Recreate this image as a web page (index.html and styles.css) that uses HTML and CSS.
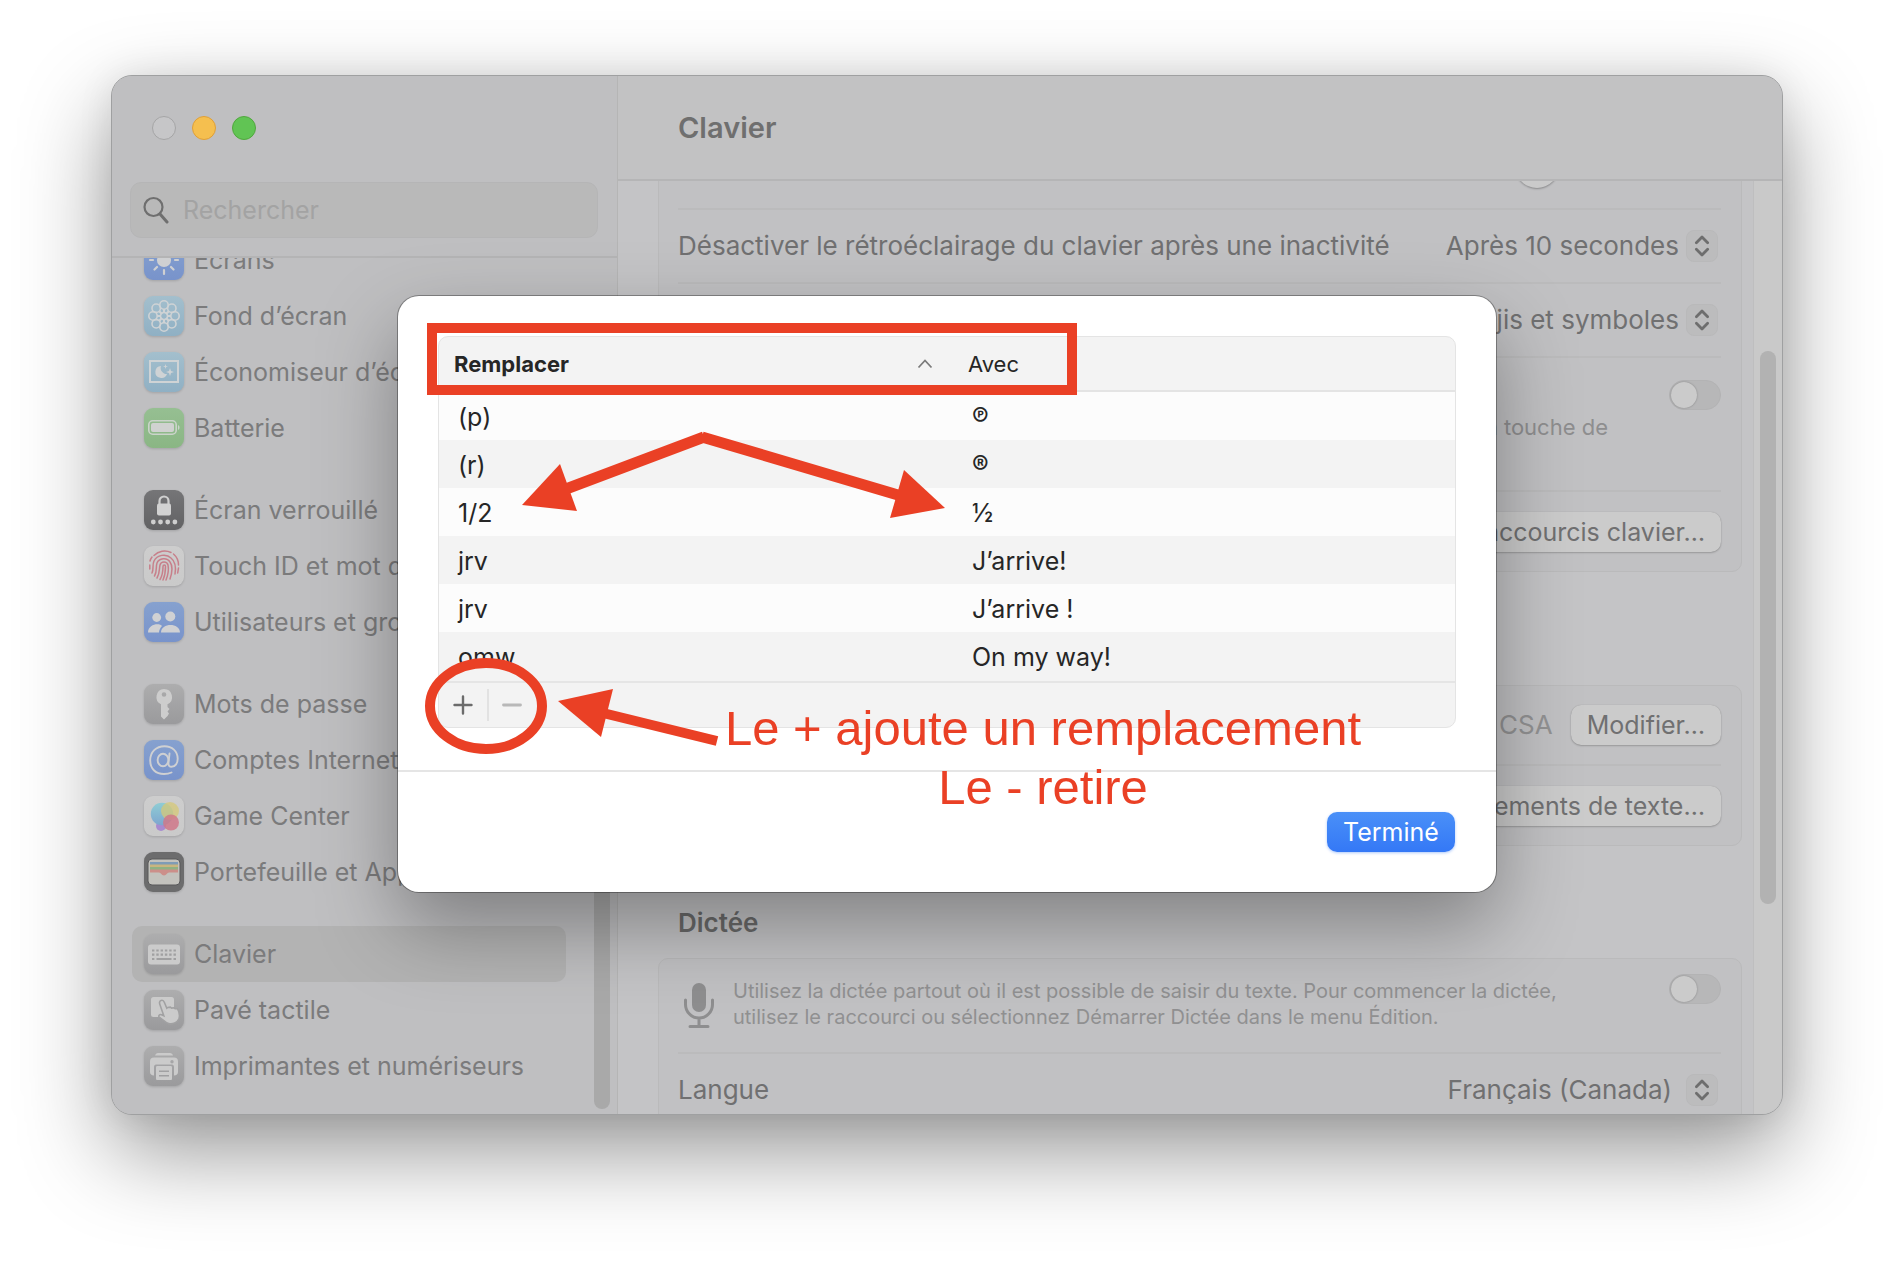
FILE: index.html
```html
<!DOCTYPE html>
<html lang="fr">
<head>
<meta charset="utf-8">
<meta name="viewport" content="width=device-width, initial-scale=1">
<title>Clavier</title>
<link rel="stylesheet" href="styles.css">
</head>
<body>
<svg width="0" height="0" class="defs" aria-hidden="true">
  <defs>
    <linearGradient id="g-blue" x1="0" y1="0" x2="0" y2="1"><stop offset="0" stop-color="#86a1cf"/><stop offset="1" stop-color="#7893cb"/></linearGradient>
    <linearGradient id="g-sky" x1="0" y1="0" x2="0" y2="1"><stop offset="0" stop-color="#a3bfcd"/><stop offset="1" stop-color="#8fb0c4"/></linearGradient>
    <linearGradient id="g-green" x1="0" y1="0" x2="0" y2="1"><stop offset="0" stop-color="#96bf92"/><stop offset="1" stop-color="#8ab684"/></linearGradient>
    <linearGradient id="g-dark" x1="0" y1="0" x2="0" y2="1"><stop offset="0" stop-color="#757577"/><stop offset="1" stop-color="#626264"/></linearGradient>
    <linearGradient id="g-gray" x1="0" y1="0" x2="0" y2="1"><stop offset="0" stop-color="#adadae"/><stop offset="1" stop-color="#9a9a9c"/></linearGradient>
    <linearGradient id="g-white" x1="0" y1="0" x2="0" y2="1"><stop offset="0" stop-color="#cdcdcd"/><stop offset="1" stop-color="#cacaca"/></linearGradient>
    <linearGradient id="g-bubble" x1="0" y1="0" x2="0" y2="1"><stop offset="0" stop-color="#8fcdd4"/><stop offset="1" stop-color="#7ea6cf"/></linearGradient>
    <symbol id="updown" viewBox="0 0 32 32"><path d="M10 12.500l6-6 6 6M10 19.500l6 6 6-6" fill="none" stroke="#6e6e6e" stroke-width="3" stroke-linecap="round" stroke-linejoin="round"/></symbol>
  </defs>
</svg>

<main class="stage">
  <div class="window">
    <aside class="sidebar">
      <div class="lights">
        <button class="light off" aria-label="Fermer"></button>
        <button class="light yellow" aria-label="Réduire"></button>
        <button class="light green" aria-label="Agrandir"></button>
      </div>
      <div class="search">
        <svg width="26" height="28" viewBox="0 0 26 28" aria-hidden="true"><circle cx="10.500" cy="11" r="9" fill="none" stroke="#6f6f6f" stroke-width="2.200"/><path d="M17 18l7 8" stroke="#6f6f6f" stroke-width="3" stroke-linecap="round"/></svg>
        <input type="search" placeholder="Rechercher" aria-label="Rechercher">
      </div>
      <nav class="list">
        <ul>
          <li><a href="#"><svg class="icon" viewBox="0 0 40 40"><rect width="40" height="40" rx="9" fill="url(#g-blue)"/><g fill="#cfd0d2" stroke="#cfd0d2" stroke-width="2.200" stroke-linecap="round"><circle cx="20" cy="20" r="6"/><path d="M20 6v4M20 30v4M6 20h3M31 20h3M10.500 10.500l2.500 2.500M27 27l2.500 2.500M29.500 10.500L27 13M13 27l-2.500 2.500"/></g></svg>Écrans</a></li>
          <li><a href="#"><svg class="icon" viewBox="0 0 40 40"><rect width="40" height="40" rx="9" fill="url(#g-sky)"/><g fill="none" stroke="#cfd3d5" stroke-width="1.600"><circle cx="20" cy="9" r="4.200"/><circle cx="20" cy="31" r="4.200"/><circle cx="9" cy="20" r="4.200"/><circle cx="31" cy="20" r="4.200"/><circle cx="12.200" cy="12.200" r="4.200"/><circle cx="27.800" cy="12.200" r="4.200"/><circle cx="12.200" cy="27.800" r="4.200"/><circle cx="27.800" cy="27.800" r="4.200"/><circle cx="20" cy="20" r="3.500"/><path d="M20 13v4M20 23v4M13 20h4M23 20h4M15 15l3 3M22 22l3 3M25 15l-3 3M18 22l-3 3" stroke-width="2.200"/></g></svg>Fond d’écran</a></li>
          <li><a href="#"><svg class="icon" viewBox="0 0 40 40"><rect width="40" height="40" rx="9" fill="url(#g-sky)"/><rect x="6" y="9" width="28" height="21" fill="none" stroke="#cfd3d5" stroke-width="2"/><path d="M17 14a6 6 0 1 0 6 8 6 6 0 0 1-6-8z" fill="#cfd3d5"/><path d="M26 16l1 3 3 1-3 1-1 3-1-3-3-1 3-1zM21.500 12l.6 1.900 1.900.6-1.900.6-.6 1.900-.6-1.900-1.900-.6 1.900-.6z" fill="#cfd3d5"/></svg>Économiseur d’écran</a></li>
          <li><a href="#"><svg class="icon" viewBox="0 0 40 40"><rect width="40" height="40" rx="9" fill="url(#g-green)"/><rect x="4.800" y="12.800" width="27.400" height="13.400" rx="4" fill="none" stroke="#ccd4cb" stroke-width="1.600"/><rect x="7" y="15" width="23" height="9" rx="2" fill="#d0d2d0"/><path d="M34 17v5c2-.8 2-4.200 0-5z" fill="#ccd4cb"/></svg>Batterie</a></li>
        </ul>
        <ul>
          <li><a href="#"><svg class="icon" viewBox="0 0 40 40"><rect width="40" height="40" rx="9" fill="url(#g-dark)"/><path d="M15.500 14v-3a4.500 4.500 0 0 1 9 0v3" fill="none" stroke="#cfcfcf" stroke-width="2.200"/><rect x="13" y="13.500" width="14" height="12" rx="2" fill="#d2d2d2"/><g fill="#cfcfcf"><circle cx="9.300" cy="32" r="2.400"/><circle cx="16.500" cy="32" r="2.400"/><circle cx="23.700" cy="32" r="2.400"/><circle cx="30.900" cy="32" r="2.400"/></g></svg>Écran verrouillé</a></li>
          <li><a href="#"><svg class="icon" viewBox="0 0 40 40"><rect width="40" height="40" rx="9" fill="url(#g-white)"/><g fill="none" stroke="#c77f8a" stroke-width="1.500" stroke-linecap="round"><path d="M10 9.500a15 15 0 0 1 17-3M29.500 8a14.500 14.500 0 0 1 5 11M6 15a14 14 0 0 1 2-4M5.800 19v4"/><path d="M8 27c2-4 0-8 2-12 3-6 12-8 17-3 5 4 5 10 4 16M34.500 22l-.8 5"/><path d="M10.500 30c3-5 1-9 2.500-13 2-5 10-6 13-1 3 4 2 11 0 17"/><path d="M13 32c3-5 2-9 3-13 1-4 7-4 8 0 1 5 0 10-2 15"/><path d="M16 33.500c3-5 3-8 3-13 0-2 2.500-2 2.500 0 0 5 0 8-2.500 13.500"/></g></svg>Touch ID et mot de passe</a></li>
          <li><a href="#"><svg class="icon" viewBox="0 0 40 40"><rect width="40" height="40" rx="9" fill="url(#g-blue)"/><g fill="#d0d1d3"><circle cx="12.700" cy="15.500" r="4.400"/><circle cx="26.300" cy="14.500" r="5"/><path d="M4 30.500c0-9 12-10 14-6.500-1.500 1.500-3 4-3 6.500zM17 30.500c0-10 19-10 19 0z"/></g></svg>Utilisateurs et groupes</a></li>
        </ul>
        <ul>
          <li><a href="#"><svg class="icon" viewBox="0 0 40 40"><rect width="40" height="40" rx="9" fill="url(#g-gray)"/><path fill-rule="evenodd" d="M20 5a8 8 0 0 1 3.500 15.200V23l2 2-2 2.500 1.500 2-1.500 2.500-3.500 3.500-3-3V20.200A8 8 0 0 1 20 5zm0 3.200a2.300 2.300 0 1 0 0 4.600 2.300 2.300 0 0 0 0-4.600z" fill="#cdcdcd"/></svg>Mots de passe</a></li>
          <li><a href="#"><svg class="icon" viewBox="0 0 40 40"><rect width="40" height="40" rx="9" fill="url(#g-blue)"/><g fill="none" stroke="#cfd0d2" stroke-width="1.900" stroke-linecap="round"><ellipse cx="19" cy="20" rx="5.400" ry="6.300"/><path d="M25.500 13.500l-1 9.500c-.3 2.500 1 3.800 3 3.800 4 0 6.200-3.800 6.200-8C33.700 11 28 6.200 20.500 6.200 12 6.200 6.200 12 6.200 20.500S12 34 20 34c3 0 5.500-.6 7.500-1.500"/></g></svg>Comptes Internet</a></li>
          <li><a href="#"><svg class="icon" viewBox="0 0 40 40"><rect x="0" y="0" width="40" height="40" rx="9" fill="url(#g-white)"/><circle cx="17" cy="30" r="5" fill="#a88bd0"/><circle cx="18" cy="18" r="11.200" fill="url(#g-bubble)"/><circle cx="26" cy="15" r="9" fill="#d6c877" fill-opacity=".75"/><circle cx="27" cy="26.500" r="8" fill="#d0788a" fill-opacity=".85"/></svg>Game Center</a></li>
          <li><a href="#"><svg class="icon" viewBox="0 0 40 40"><rect width="40" height="40" rx="9" fill="#6c6c6d"/><rect x="4" y="7" width="32" height="26" rx="4" fill="#c3c2bd" stroke="#58585a"/><path d="M6 10h28v3H6z" fill="#7f9cb6"/><path d="M6 12.500h28v3H6z" fill="#c9b57f"/><path d="M6 15h28v3H6z" fill="#90b183"/><path d="M6 17.500h28v3h-9c-2 0-2.500 3-5 3s-3-3-5-3H6z" fill="#cc8f8a"/></svg>Portefeuille et Apple Pay</a></li>
        </ul>
        <ul>
          <li><a href="#" class="selected" aria-current="page"><svg class="icon" viewBox="0 0 40 40"><rect width="40" height="40" rx="9" fill="url(#g-gray)"/><rect x="4" y="10.500" width="32" height="20" rx="3" fill="#cbcbcb"/><g stroke="#a0a0a1" stroke-width="2.200" fill="none"><path d="M8 16.500h24" stroke-dasharray="2.400 1.900"/><path d="M8 20.700h24" stroke-dasharray="2.400 1.900"/><path d="M8 25h2.400M12.500 25h15M29.500 25h2.500"/></g></svg>Clavier</a></li>
          <li><a href="#"><svg class="icon" viewBox="0 0 40 40"><rect width="40" height="40" rx="9" fill="url(#g-gray)"/><rect x="7" y="7" width="23" height="20" rx="2.500" fill="#cbcbcb"/><path d="M17 10.500c1.600-.6 2.700.3 3.300 1.800l2.500 6 1-.8 2.500-.3 1.300.9 2.400-.3 1.200 1 2.200-.1c1.800 3 2.600 7 1.400 10.300-1.500 3.600-6 5.500-10 4.600-3.500-.8-6-4.200-9.500-6.500-1.400-1 .2-3.200 2.200-2.400l2.300 1-4-11.500c-.6-1.600-.2-3.200 1.200-3.700z" fill="#cbcbcb" stroke="#a1a1a2" stroke-width="1.600"/></svg>Pavé tactile</a></li>
          <li><a href="#"><svg class="icon" viewBox="0 0 40 40"><rect width="40" height="40" rx="9" fill="url(#g-gray)"/><path d="M11 9.500c.5-1.600 1.500-2.500 3-2.500h12c1.500 0 2.500.9 3 2.500z" fill="#cbcbcb"/><path fill-rule="evenodd" d="M10 11.500h20a4 4 0 0 1 4 4V26c0 2-1.500 3.500-4 3.500V21c0-1.500-.8-2.500-2-2.500H12c-1.200 0-2 1-2 2.500v8.500c-2.500 0-4-1.500-4-3.500V15.500a4 4 0 0 1 4-4zm18 2.500a1.700 1.700 0 1 0 0 3.400 1.700 1.700 0 0 0 0-3.400z" fill="#cbcbcb"/><path fill-rule="evenodd" d="M13.500 20h13c1 0 1.500.5 1.500 1.500v11c0 1-.5 1.500-1.500 1.500h-13c-1 0-1.500-.5-1.500-1.500v-11c0-1 .5-1.500 1.500-1.500zm1.500 4.500V26h10v-1.500zm0 4.500v1.500h10V29z" fill="#cbcbcb"/></svg>Imprimantes et numériseurs</a></li>
        </ul>
      </nav>
      <div class="side-scroll" aria-hidden="true"></div>
    </aside>

    <section class="pane">
      <header class="titlebar"><h1>Clavier</h1></header>
      <div class="body">
        <div class="form">
          <div class="card first">
            <div class="row light-row"><input type="range" class="slider" aria-label="Luminosité du clavier" value="50"></div>
            <div class="row">
              <label for="backlight">Désactiver le rétroéclairage du clavier après une inactivité</label>
              <span class="popup"><select id="backlight"><option>Après 10 secondes</option></select><svg class="chev" aria-hidden="true"><use href="#updown"/></svg></span>
            </div>
            <div class="row">
              <label for="globe">Appuyer sur la touche fn pour</label>
              <span class="popup"><select id="globe"><option>Afficher emojis et symboles</option></select><svg class="chev" aria-hidden="true"><use href="#updown"/></svg></span>
            </div>
            <div class="row nav-row">
              <div class="nav-text">
                <label for="kbnav">Navigation au clavier</label>
                <p>Utilisez la navigation au clavier pour déplacer le curseur entre champs avec la touche de</p>
              </div>
              <input type="checkbox" class="switch" id="kbnav">
            </div>
            <div class="row end"><button class="btn">Raccourcis clavier…</button></div>
          </div>
          <h2>Saisie de texte</h2>
          <div class="card second">
            <div class="row"><span>Méthodes de saisie</span><span class="value">Canadien – CSA</span><button class="btn">Modifier…</button></div>
            <div class="row end"><button class="btn">Remplacements de texte…</button></div>
          </div>
          <h2 class="dictation">Dictée</h2>
          <div class="card">
            <div class="row mic-row">
              <svg class="mic" width="30" height="46" viewBox="0 0 30 46" aria-hidden="true"><rect x="8" y="0" width="14" height="29" rx="7" fill="#8e8e8f"/><path d="M1.500 17v4.500a13.500 13.500 0 0 0 27 0V17M15 35v8M6 43.500h18" fill="none" stroke="#8e8e8f" stroke-width="3" stroke-linecap="round"/></svg>
              <label for="dictation">Utilisez la dictée partout où il est possible de saisir du texte. Pour commencer la dictée,<br>utilisez le raccourci ou sélectionnez Démarrer Dictée dans le menu Édition.</label>
              <input type="checkbox" class="switch" id="dictation">
            </div>
            <div class="row">
              <label for="lang">Langue</label>
              <span class="popup wide"><select id="lang"><option>Français (Canada)</option></select><svg class="chev" aria-hidden="true"><use href="#updown"/></svg></span>
            </div>
          </div>
        </div>
        <div class="track" aria-hidden="true"><div class="thumb"></div></div>
      </div>
    </section>
  </div>

  <div class="modal" role="dialog" aria-label="Remplacements de texte">
    <div class="modal-main">
      <div class="tablebox">
        <table>
          <thead>
            <tr><th class="sorted" aria-sort="ascending"><span class="th">Remplacer<svg width="16" height="10" viewBox="0 0 16 10" aria-hidden="true"><path d="M1.500 8.500L8 1.500l6.500 7" fill="none" stroke="#7b7b7b" stroke-width="1.800"/></svg></span></th><th>Avec</th></tr>
          </thead>
          <tbody>
            <tr><td>(p)</td><td class="mark">℗</td></tr>
            <tr><td>(r)</td><td class="mark">®</td></tr>
            <tr><td>1/2</td><td>½</td></tr>
            <tr><td>jrv</td><td>J’arrive!</td></tr>
            <tr><td>jrv</td><td>J’arrive !</td></tr>
            <tr><td>omw</td><td>On my way!</td></tr>
          </tbody>
        </table>
        <div class="tools">
          <button aria-label="Ajouter"><svg width="20" height="20" viewBox="0 0 20 20"><path d="M10 1.500v17M1.500 10h17" stroke="#6b6b6b" stroke-width="2.400" stroke-linecap="round"/></svg></button>
          <button aria-label="Retirer" disabled><svg width="20" height="20" viewBox="0 0 20 20"><path d="M1.500 10h17" stroke="#b8b8b8" stroke-width="2.800" stroke-linecap="round"/></svg></button>
        </div>
      </div>
    </div>
    <div class="modal-foot"><button class="primary">Terminé</button></div>

    <svg class="marks" viewBox="0 0 1098 596" aria-hidden="true">
      <g fill="none" stroke="#ea4025" stroke-width="10">
        <path d="M34 32H674V94H34z"/>
        <ellipse cx="88" cy="410" rx="56" ry="43"/>
        <path d="M306 141L168 193M304 141L500 199" stroke-width="11"/>
        <path d="M319 445L205 417" stroke-width="10"/>
      </g>
      <g fill="#ea4025">
        <path d="M124 209L162 168L179 215z"/>
        <path d="M547 212L506 174L492 222z"/>
        <path d="M160 405L215 393L203 441z"/>
      </g>
    </svg>
    <p class="note">Le + ajoute un remplacement<br>Le - retire</p>
  </div>
</main>
</body>
</html>
```
FILE: styles.css
```css
* { box-sizing: border-box; }

body {
  margin: 0;
  background: #fff;
  color: #707071;
  font-family: Inter, "Liberation Sans", sans-serif;
  font-size: 26px;
  line-height: 32px;
}

ul { list-style: none; margin: 0; padding: 0; }
h1, h2, p { margin: 0; }
button, input, select { font: inherit; color: inherit; margin: 0; }
.defs { position: absolute; }

.stage {
  position: relative;
  height: 100vh;
  padding: 75px 111px 147px;
  overflow: hidden;
}

.window {
  display: flex;
  height: 100%;
  border: 1px solid #9fa0a1;
  border-radius: 21px;
  overflow: hidden;
  background: #c4c4c6;
  box-shadow: 0 36px 90px rgba(0, 0, 0, .42), 0 0 36px rgba(0, 0, 0, .08);
}

/* Sidebar */
.sidebar {
  position: relative;
  display: flex;
  flex-direction: column;
  flex: none;
  width: 506px;
  border-right: 1px solid #b5b5b5;
  background: #bfbfc1;
  color: #7b7b7c;
  font-size: 25px;
}

.lights { display: flex; gap: 16px; padding: 40px 40px 42px; }
.light { width: 24px; height: 24px; padding: 0; border: 1px solid; border-radius: 50%; }
.off { background: #c6c6c8; border-color: #a5a5a6; }
.yellow { background: #f5bf4f; border-color: #df9f38; }
.green { background: #61c454; border-color: #51a73e; }

.search {
  display: flex;
  align-items: center;
  gap: 14px;
  flex: none;
  height: 56px;
  margin: 0 19px 18px 18px;
  padding: 0 12px;
  border: 1px solid #b5b5b6;
  border-radius: 11px;
  background: #b9b9b9;
}
.search input { flex: 1; min-width: 0; padding: 0; border: 0; outline: 0; background: none; appearance: none; }
.search input::placeholder { color: #a3a3a3; opacity: 1; }

.list {
  flex: 1;
  min-height: 0;
  overflow: hidden;
  padding: 0 51px 0 20px;
  border-top: 2px solid #b4b4b5;
}
.list ul:first-child { margin-top: -26px; }
.list ul + ul { margin-top: 26px; }
.list a {
  display: flex;
  align-items: center;
  gap: 10px;
  height: 56px;
  padding: 0 12px;
  border-radius: 10px;
  color: inherit;
  text-decoration: none;
  white-space: nowrap;
}
.list a.selected { background: #b3b3b3; }
.icon { flex: none; width: 40px; height: 40px; filter: drop-shadow(0 1px 1px rgba(0, 0, 0, .15)); }

.side-scroll {
  position: absolute;
  right: 7px;
  bottom: 5px;
  width: 16px;
  height: 420px;
  border-radius: 8px;
  background: #a9a9a9;
}

/* Main pane */
.pane { display: flex; flex: 1; flex-direction: column; min-width: 0; }
.titlebar {
  display: flex;
  align-items: center;
  flex: none;
  height: 105px;
  padding: 0 60px;
  border-bottom: 2px solid #b5b5b6;
  background: #c2c2c3;
}
h1 { font-size: 29px; font-weight: 600; color: #6f6f6f; }
.body { display: flex; flex: 1; min-height: 0; overflow: hidden; }
.form { flex: 1; min-width: 0; padding: 0 11px 0 40px; }
.track { flex: none; width: 29px; padding: 170px 6px 0; border-left: 1px solid #bebebf; background: #c9c9c9; }
.thumb { width: 16px; height: 553px; border-radius: 8px; background: #b2b2b2; }

h2 { padding: 0 20px; font-size: 26px; font-weight: 600; color: #6a6a6a; }
.card { padding: 0 20px 0 19px; border: 1px solid #bababb; border-radius: 10px; background: #c1c1c3; }
.card.first { margin-top: -48px; margin-bottom: 40px; }
.card.second { margin-top: 41px; margin-bottom: 61px; }
.dictation + .card { margin-top: 19px; }

.row { display: flex; align-items: center; justify-content: space-between; min-height: 74px; white-space: nowrap; }
.row + .row { border-top: 2px solid #bbbbbc; }
.end { justify-content: flex-end; }
.light-row { justify-content: flex-end; padding-bottom: 10px; }
.second .row { min-height: 78px; }
.card .end { min-height: 81px; }
.value { margin-left: auto; margin-right: 18px; color: #929293; }

.popup { display: flex; align-items: center; gap: 7px; padding-right: 3px; }
.popup.wide { gap: 14px; }
.popup select { padding: 0; border: 0; background: none; appearance: none; text-align: right; }
.chev { width: 32px; height: 32px; border: 1px solid #b9b9ba; border-radius: 8px; background: #bcbcbd; }

.nav-row { align-items: flex-start; height: 134px; padding-top: 22px; }
.nav-text { width: 930px; }
.nav-text p { font-size: 22px; line-height: 26px; text-align: right; color: #8e8e8f; padding-top: 2px; }

.switch {
  appearance: none;
  flex: none;
  width: 52px;
  height: 30px;
  border: 1px solid #b3b3b4;
  border-radius: 15px;
  background: #b7b7b8;
}
.switch::before {
  content: "";
  display: block;
  width: 26px;
  height: 26px;
  margin: 1px;
  border-radius: 50%;
  background: #cbcbcb;
  box-shadow: 0 0 2px rgba(0, 0, 0, .3);
}

.slider { appearance: none; width: 368px; height: 44px; background: none; }
.slider::-webkit-slider-thumb {
  appearance: none;
  width: 44px;
  height: 44px;
  border-radius: 50%;
  background: #cacaca;
  box-shadow: 0 1px 2px rgba(0, 0, 0, .3);
}

.btn {
  height: 40px;
  padding: 0 16px;
  border: 0;
  border-radius: 10px;
  background: #cbcbcb;
  box-shadow: 0 0 1px rgba(0, 0, 0, .2), 0 1px 2px rgba(0, 0, 0, .2);
  font-size: 25px;
  line-height: 38px;
}

.mic-row { align-items: flex-start; min-height: 93px; padding-top: 15px; }
.mic { margin: 9px 19px 0 6px; flex: none; }
.mic-row label { flex: 1; padding-top: 4px; font-size: 20px; line-height: 26px; color: #909091; }

/* Dialog */
.modal {
  position: absolute;
  top: 296px;
  left: 50%;
  width: 1098px;
  margin-left: -549px;
  border-radius: 21px;
  background: #fff;
  color: #262626;
  font-size: 25px;
  box-shadow: 0 0 0 1px rgba(0, 0, 0, .32), 0 34px 80px rgba(0, 0, 0, .34);
}
.modal-main { padding: 40px 40px 42px; border-bottom: 2px solid #e5e5e5; }
.tablebox { border: 1px solid #e4e4e4; border-radius: 10px; overflow: hidden; background: #f3f3f3; }

table { width: 100%; margin-bottom: 1px; border-collapse: separate; border-spacing: 0; table-layout: fixed; }
th { height: 55px; padding: 0 15px; border-bottom: 2px solid #e4e4e4; font-size: 22px; font-weight: 400; text-align: left; }
th.sorted { width: 514px; font-weight: 700; }
.th { display: flex; align-items: center; justify-content: space-between; padding-right: 5px; }
td { height: 48px; padding: 1px 19px 0; }
tbody tr:nth-child(odd) { background: #fcfcfc; }
tbody tr:nth-child(even) { background: #f3f3f3; }
.mark { font-weight: 600; }

.tools { display: flex; height: 46px; padding: 6px 0; border-top: 2px solid #e5e5e5; }
.tools button { display: flex; align-items: center; justify-content: center; width: 48px; height: 32px; padding: 0; border: 0; background: none; }
.tools button + button { border-left: 2px solid #e2e2e2; }

.modal-foot { display: flex; justify-content: flex-end; padding: 40px 41px; }
.primary {
  width: 128px;
  height: 40px;
  padding: 0;
  border: 0;
  border-radius: 10px;
  background: linear-gradient(#4a90f8, #3478f6);
  box-shadow: 0 1px 3px rgba(52, 120, 246, .4);
  color: #fff;
  line-height: 38px;
}

/* Hand-placed annotations over the dialog */
.marks { position: absolute; inset: 0; width: 100%; height: 100%; pointer-events: none; }
.note {
  position: absolute;
  top: 403px;
  left: 327px;
  color: #ea4025;
  font: 49px/59px "Liberation Sans", Arial, sans-serif;
  text-align: center;
  white-space: nowrap;
}
```
